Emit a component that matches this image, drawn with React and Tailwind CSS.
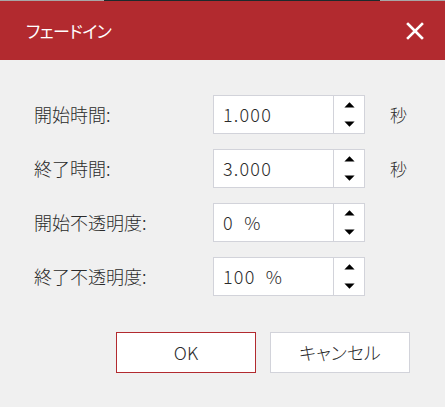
import React from 'react';

const font = { fontFamily: '"Noto Sans CJK JP", "Noto Sans", sans-serif' };

function Spin() {
  return (
    <div className="w-[31px] border-l border-[#d2d3da] flex flex-col items-center justify-center gap-[13px]">
      <svg width="11" height="6" viewBox="0 0 11 6">
        <path d="M5.5 0.3 L10.6 5.6 L0.4 5.6 Z" fill="#000" />
      </svg>
      <svg width="11" height="6" viewBox="0 0 11 6">
        <path d="M0.4 0.4 L10.6 0.4 L5.5 5.7 Z" fill="#000" />
      </svg>
    </div>
  );
}

function Row({ label, value, unit }) {
  return (
    <div className="flex items-center h-[39px]">
      <div className="w-[179px] text-[18px] font-light text-[#2b2b2b] [font-feature-settings:'palt']">{label}</div>
      <div className="w-[152px] h-[39px] bg-white border border-[#d2d3da] flex">
        <div className="flex-1 pl-[9px] flex items-center text-[18px] font-light text-[#2b2b2b] tracking-[1.2px] whitespace-pre">{value}</div>
        <Spin />
      </div>
      {unit && <div className="ml-[25px] text-[17px] font-light text-[#2b2b2b]">{unit}</div>}
    </div>
  );
}

export default function App() {
  return (
    <div className="w-[445px] h-[407px] bg-[#f0f0f0] overflow-hidden" style={font}>
      <div className="h-px flex">
        <div className="w-[104px] bg-[#a7a7a7]" />
        <div className="w-[276px] bg-[#1c2a2c]" />
        <div className="flex-1 bg-[#a7a7a7]" />
      </div>
      <div className="h-[59px] bg-[#b22a2f] flex items-center justify-between pl-[26px] pr-[21px]">
        <span className="text-white text-[17px] tracking-[-0.5px] [font-feature-settings:'palt']">フェードイン</span>
        <svg width="18" height="18" viewBox="0 0 18 18">
          <path d="M2 2 L16 16 M16 2 L2 16" stroke="#fff" strokeWidth="2.6" strokeLinecap="square" />
        </svg>
      </div>
      <div className="pt-[35px] px-[34px]">
        <div className="flex flex-col gap-[15px]">
          <Row label="開始時間:" value="1.000" unit="秒" />
          <Row label="終了時間:" value="3.000" unit="秒" />
          <Row label="開始不透明度:" value="0  %" />
          <Row label="終了不透明度:" value="100  %" />
        </div>
        <div className="mt-[36px] ml-[82px] flex gap-[14px]">
          <button className="w-[140px] h-[41px] bg-white border border-[#b22a2f] text-[18px] font-light text-[#2b2b2b]">OK</button>
          <button className="w-[140px] h-[41px] bg-white border border-[#d2d3da] text-[18px] font-light text-[#2b2b2b] [font-feature-settings:'palt']">キャンセル</button>
        </div>
      </div>
    </div>
  );
}
